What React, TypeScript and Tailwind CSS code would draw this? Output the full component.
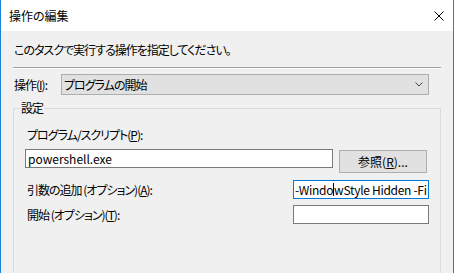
const jp = "font-['Noto_Sans_CJK_JP',sans-serif] [font-feature-settings:'palt'] text-[12px] leading-[16px] text-black";

function CloseIcon() {
    return (
        <svg width="10" height="10" viewBox="0 0 10 10" className="block">
            <path d="M0.5 0.5 L9.5 9.5 M9.5 0.5 L0.5 9.5" stroke="#000" strokeWidth="1" fill="none" />
        </svg>
    );
}

function Chevron() {
    return (
        <svg width="8" height="5" viewBox="0 0 8 5" className="block">
            <path d="M0.5 0.5 L4 4 L7.5 0.5" stroke="#444" strokeWidth="1" fill="none" />
        </svg>
    );
}

export default function App() {
    return (
        <div className={`w-[454px] h-[273px] overflow-hidden flex flex-col border-x border-[#1a84d8] bg-[#f0f0f0] ${jp}`}>
            <div className="h-[31px] shrink-0 bg-white flex items-center justify-between pl-[8px] pr-[9px]">
                <span className="text-[12px]">操作の編集</span>
                <CloseIcon />
            </div>
            <div className="flex flex-col px-[12px] pt-[11px] tracking-[-1px]">
                <p className="pl-[1px]">このタスクで実行する操作を指定してください。</p>
                <div className="mt-[9px] h-[2px] border-t border-[#a0a0a0] border-b border-b-white" />
                <div className="mt-[5px] flex items-center pr-[12px]">
                    <span className="pl-[1px] w-[48px]">操作(<u>I</u>):</span>
                    <div className="ml-auto w-[368px] h-[21px] border border-[#adadad] bg-[#e1e1e1] flex items-center justify-between pl-[2px] pr-[5px]">
                        <span>プログラムの開始</span>
                        <Chevron />
                    </div>
                </div>
                <div className="relative mt-[13px] h-[200px] border border-[#dcdcdc] pl-[11px] pr-[11px] pt-[18px]">
                    <span className="absolute left-[6px] top-[-9px] px-[1px] bg-[#f0f0f0]">設定</span>
                    <p className="pl-[2px]">プログラム/スクリプト(<u>P</u>):</p>
                    <div className="mt-[6px] flex items-start gap-[6px]">
                        <div className="w-[308px] h-[19px] border border-[#7a7a7a] bg-white pl-[2px] flex items-center tracking-normal">powershell.exe</div>
                        <div className="mt-[1px] w-[88px] h-[23px] border border-[#adadad] bg-[#e1e1e1] flex items-center justify-center tracking-normal">参照(<u>R</u>)...</div>
                    </div>
                    <div className="mt-[7px] flex items-center justify-between">
                        <span className="pl-[2px]">引数の追加 (オプション)(<u>A</u>):</span>
                        <div className="w-[136px] h-[19px] border border-[#0078d7] bg-white pl-[1px] flex items-center overflow-hidden whitespace-nowrap tracking-[-0.3px]">
                            <span>-Windo</span>
                            <span className="inline-block w-px h-[13px] bg-black" />
                            <span>wStyle Hidden -Fi</span>
                        </div>
                    </div>
                    <div className="mt-[6px] flex items-center justify-between">
                        <span className="pl-[2px]">開始 (オプション)(<u>T</u>):</span>
                        <div className="w-[136px] h-[19px] border border-[#7a7a7a] bg-white" />
                    </div>
                </div>
            </div>
        </div>
    );
}
